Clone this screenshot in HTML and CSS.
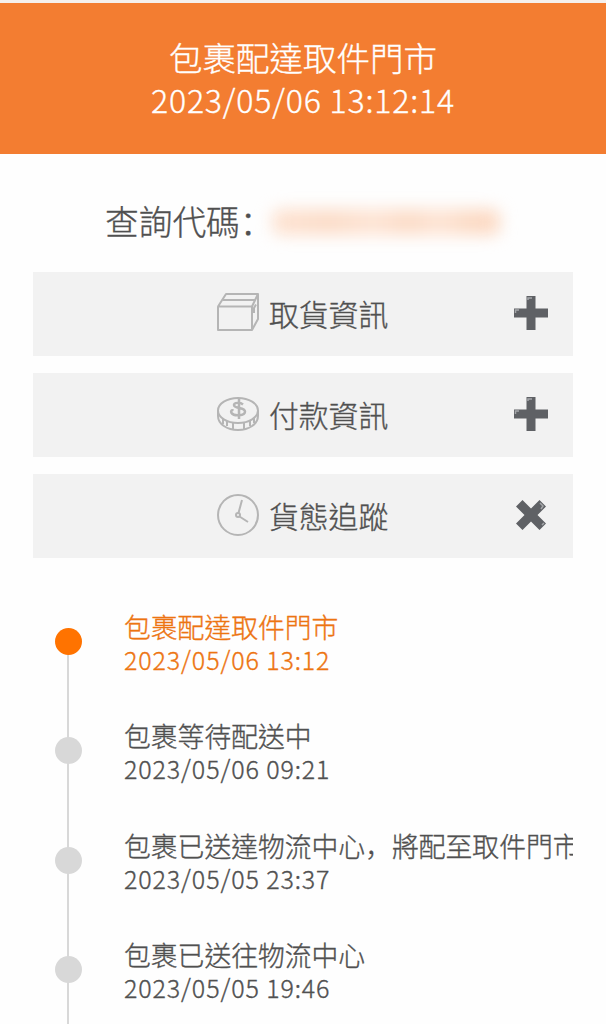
FILE: index.html
```html
<!DOCTYPE html>
<html lang="zh-Hant">
<head>
    <meta charset="UTF-8">
    <meta name="viewport" content="width=device-width, initial-scale=1.0">
    <title>貨態查詢</title>
    <link rel="stylesheet" href="styles.css">
</head>
<body>
    <header class="status-header">
        <h1>包裹配達取件門市</h1>
        <p class="status-time">2023/05/06 13:12:14</p>
    </header>

    <main class="container">
        <div class="query-code">
            <span class="query-label">查詢代碼<span class="punct" lang="zh-Hans">：</span></span>
            <div class="masked-code"></div>
        </div>

        <!-- 資訊選單 -->
        <div class="panel-list">
            <div class="panel">
                <svg class="panel-icon" viewBox="0 0 42 42"><path d="M1 14.500H35V38H1ZM1 14.500L9 2H41L35 14.500M41 2V27L35 38M6 8H38M37 21V16L39 12.500"/></svg>
                <span class="panel-title">取貨資訊</span>
                <svg class="toggle" viewBox="0 0 34 34"><path class="mark" d="M12.500 0H21.500V12.500H34V21.500H21.500V34H12.500V21.500H0V12.500H12.500Z"/><path class="shine" d="M14 4V2H18M1.500 17V14H5"/></svg>
            </div>
            <div class="panel">
                <svg class="panel-icon" viewBox="0 0 42 42"><ellipse cx="21" cy="17.500" rx="20" ry="12.500"/><path d="M1 17.500V23C1 31 10 37 21 37S41 31 41 23V17.500M6 26V31M10 28V33M16 30V36M27 30V36M33 28V33M37 25V30"/><path class="dollar" d="M26 11.500C23 9 17 9.500 17 12C17 16 28 14 28 18.500C28 23 17 23.500 14.500 20C13.500 18 14.500 16.500 16.500 17.500M22 6V26"/></svg>
                <span class="panel-title">付款資訊</span>
                <svg class="toggle" viewBox="0 0 34 34"><path class="mark" d="M12.500 0H21.500V12.500H34V21.500H21.500V34H12.500V21.500H0V12.500H12.500Z"/><path class="shine" d="M14 4V2H18M1.500 17V14H5"/></svg>
            </div>
            <div class="panel">
                <svg class="panel-icon" viewBox="0 0 42 42"><circle cx="21" cy="21" r="20"/><circle cx="21" cy="21" r="2"/><path d="M21.500 19L25 6M22.500 22.500L31 28"/></svg>
                <span class="panel-title">貨態追蹤</span>
                <svg class="toggle" viewBox="0 0 34 34"><path class="mark" d="M8.500 2L17 10.500L25.500 2L32 8.500L23.500 17L32 25.500L25.500 32L17 23.500L8.500 32L2 25.500L10.500 17L2 8.500Z"/><path class="shine" d="M26 5L29 8L27 11M28 27L30 25"/></svg>
            </div>
        </div>

        <!-- 貨態時間軸 -->
        <ul class="timeline">
            <li class="event active">
                <p>包裹配達取件門市</p>
                <p class="event-time">2023/05/06 13:12</p>
            </li>
            <li class="event">
                <p>包裹等待配送中</p>
                <p class="event-time">2023/05/06 09:21</p>
            </li>
            <li class="event">
                <p>包裹已送達物流中心<span class="punct" lang="zh-Hans">，</span>將配至取件門市</p>
                <p class="event-time">2023/05/05 23:37</p>
            </li>
            <li class="event">
                <p>包裹已送往物流中心</p>
                <p class="event-time">2023/05/05 19:46</p>
            </li>
        </ul>
    </main>
</body>
</html>
```

FILE: styles.css
```css
* {
    box-sizing: border-box;
}

body {
    margin: 0;
    height: 1024px;
    overflow: hidden;
    background-color: #fefefe;
    color: #505050;
    font-family: "Noto Sans CJK TC", sans-serif;
    font-weight: 300;
    -webkit-text-stroke: 0.35px currentColor;
}

h1,
p {
    margin: 0;
    font-weight: 300;
}

.punct {
    font-family: "Noto Sans CJK SC", sans-serif;
}

.status-header {
    height: 154px;
    padding-top: 33px;
    border-top: 3px solid #f5f0ec;
    background-color: #f37d31;
    color: #fff;
    text-align: center;
    line-height: 42px;
}

.status-header h1 {
    font-size: 33.5px;
}

.status-time {
    font-size: 32px;
    letter-spacing: 0.85px;
}

.container {
    padding: 0 33px;
}

.query-code {
    display: flex;
    align-items: center;
    height: 118px;
    padding: 18px 0 0 72px;
    font-size: 33.7px;
}

.query-label {
    padding-bottom: 3px;
}

/* 代碼以模糊色塊遮蔽 */
.masked-code {
    width: 228px;
    height: 26px;
    margin-left: -1px;
    border-radius: 8px;
    background: linear-gradient(90deg, #fde3d2, #fcdcc8 25%, #fde4d4 45%, #fcdbc6 60%, #fde4d4 73%, #fcdac4 88%);
    filter: blur(8px);
}

.panel-list {
    display: grid;
    gap: 17px;
}

.panel {
    display: flex;
    align-items: center;
    height: 84px;
    padding: 0 25px 2px 184px;
    background-color: #f2f2f2;
}

.panel-icon {
    width: 42px;
    height: 42px;
    margin-right: 10px;
    fill: none;
    stroke: #b5b5b5;
    stroke-width: 2;
    stroke-linejoin: round;
}

.panel-icon .dollar {
    stroke-width: 2.5;
}

.panel-title {
    font-size: 29.8px;
}

.toggle {
    width: 34px;
    height: 34px;
    margin-left: auto;
}

.mark {
    fill: #5f6165;
}

.shine {
    fill: none;
    stroke: #a5a7aa;
    stroke-width: 1.5;
}

.timeline {
    margin: 0;
    padding: 52px 0 0 22px;
    overflow: hidden;
    list-style: none;
}

.event {
    position: relative;
    height: 109.4px;
    padding-left: 69px;
    font-size: 26.8px;
    line-height: 33px;
    white-space: nowrap;
}

.event::before {
    content: "";
    position: absolute;
    top: 0;
    bottom: 0;
    left: 12px;
    width: 2px;
    background-color: #d8d8d8;
}

.event::after {
    content: "";
    position: absolute;
    top: 18px;
    left: 0;
    width: 27px;
    height: 27px;
    border-radius: 50%;
    background-color: #d8d8d8;
}

.event.active {
    color: #ed7411;
}

.event.active::before {
    top: 30px;
}

.event.active::after {
    background-color: #ff7300;
}

.event-time {
    font-size: 25px;
    letter-spacing: 0.9px;
}
```
